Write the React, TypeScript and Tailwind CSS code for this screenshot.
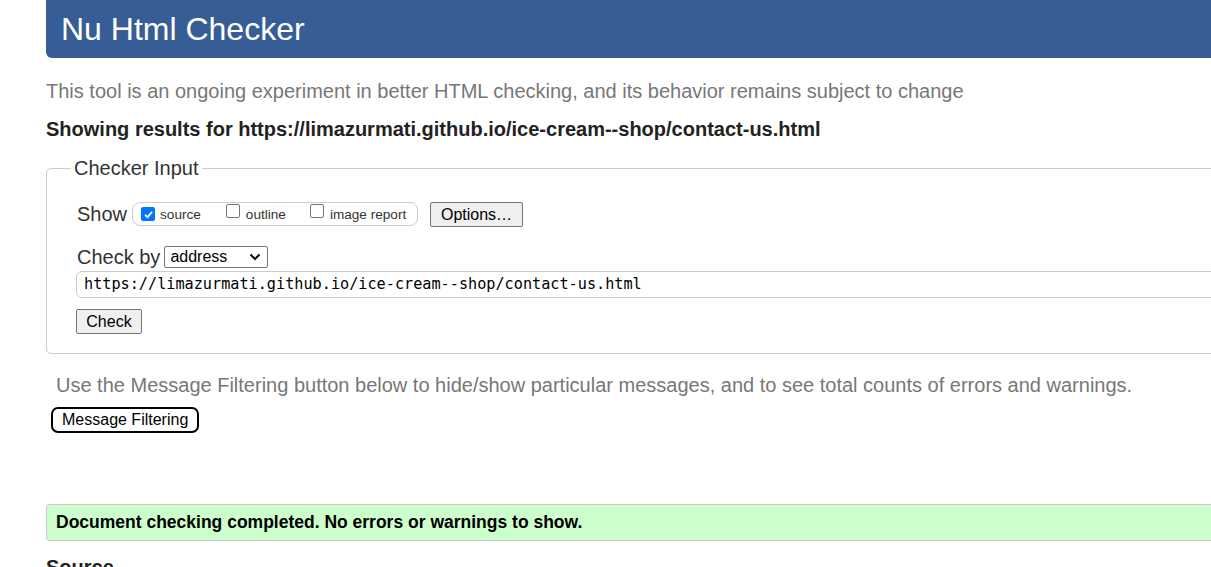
import React from "react";

function Box({ checked }: { checked?: boolean }) {
  if (checked) {
    return (
      <span className="inline-flex items-center justify-center w-[14px] h-[14px] rounded-[2px] bg-[#0075ff] shrink-0">
        <svg width="11" height="11" viewBox="0 0 12 12">
          <path d="M2.2 6.3 L4.9 8.9 L9.9 3.2" fill="none" stroke="white" strokeWidth="2" />
        </svg>
      </span>
    );
  }
  return <span className="inline-block w-[14px] h-[14px] rounded-[2px] border border-[#767676] bg-white shrink-0" />;
}

export default function App() {
  return (
    <div className="w-[1211px] h-[567px] overflow-hidden bg-white font-['Liberation_Sans',Arial,sans-serif] text-[#222]">
      <div className="ml-[46px] w-[1300px]">
        <div className="h-[58px] bg-[#365d95] rounded-b-[6px] flex items-center pl-[15px]">
          <h1 className="text-white text-[32px] leading-[32px] font-normal">Nu Html Checker</h1>
        </div>
        <p className="mt-[21px] text-[20px] leading-[24px] text-[#777]">
          This tool is an ongoing experiment in better HTML checking, and its behavior remains subject to change
        </p>
        <p className="mt-[14px] text-[20px] leading-[24px] font-bold text-[#222]">
          Showing results for https://limazurmati.github.io/ice-cream--shop/contact-us.html
        </p>
        <div className="relative mt-[27px] h-[186px] border border-[#ccc] rounded-[5px]">
          <div className="absolute left-[24px] top-[-12px] bg-white px-[3px] text-[20px] leading-[22px] text-[#333]">
            Checker Input
          </div>
          <div className="pl-[30px] pt-[33px]">
            <div className="flex items-center h-[24px]">
              <span className="text-[20px] leading-[24px] text-[#333] mr-[5px]">Show</span>
              <div className="flex items-center h-[24px] w-[286px] border border-[#ccc] rounded-[8px] pl-[8px] text-[13.6px] text-[#333]">
                <Box checked />
                <span className="ml-[5px] mt-[2px]">source</span>
                <span className="ml-[25px]"><Box /></span>
                <span className="ml-[6px] mt-[2px]">outline</span>
                <span className="ml-[24px]"><Box /></span>
                <span className="ml-[6px] mt-[2px]">image report</span>
              </div>
              <button className="ml-[12px] h-[25px] w-[93px] bg-[#efefef] border border-[#767676] rounded-[2px] text-[16px] text-black">
                Options…
              </button>
            </div>
            <div className="flex items-center mt-[20px] h-[22px]">
              <span className="text-[20px] leading-[24px] text-[#333] mr-[4px]">Check by</span>
              <div className="flex items-center justify-between w-[104px] h-[22px] border border-[#767676] rounded-[2px] pl-[5px] pr-[6px] text-[16px] text-black">
                <span>address</span>
                <svg width="12" height="8" viewBox="0 0 12 8">
                  <path d="M1.5 1.5 L6 6 L10.5 1.5" fill="none" stroke="black" strokeWidth="2" />
                </svg>
              </div>
            </div>
            <div className="mt-[3px] -ml-[1px] h-[27px] border border-[#ccc] rounded-[6px] flex items-center pl-[7px] font-['DejaVu_Sans_Mono','Liberation_Mono',monospace] text-[15.2px] text-black">
              https://limazurmati.github.io/ice-cream--shop/contact-us.html
            </div>
            <button className="mt-[11px] -ml-[1px] h-[25px] w-[66px] bg-[#efefef] border border-[#767676] rounded-[2px] text-[16px] text-black">
              Check
            </button>
          </div>
        </div>
        <p className="mt-[19px] ml-[10px] text-[20px] leading-[24px] text-[#777]">
          Use the Message Filtering button below to hide/show particular messages, and to see total counts of errors and warnings.
        </p>
        <button className="mt-[10px] ml-[5px] h-[26px] px-[9px] border-2 border-black rounded-[7px] bg-white text-[16px] leading-[18px] text-black">
          Message Filtering
        </button>
        <div className="mt-[71px] h-[37px] bg-[#ccffcc] border border-[#ccc] rounded-[3px] flex items-center pl-[9px] text-[17.5px] font-bold text-black">
          Document checking completed. No errors or warnings to show.
        </div>
        <h2 className="mt-[14px] text-[20px] leading-[24px] font-bold text-[#222]">Source</h2>
      </div>
    </div>
  );
}
